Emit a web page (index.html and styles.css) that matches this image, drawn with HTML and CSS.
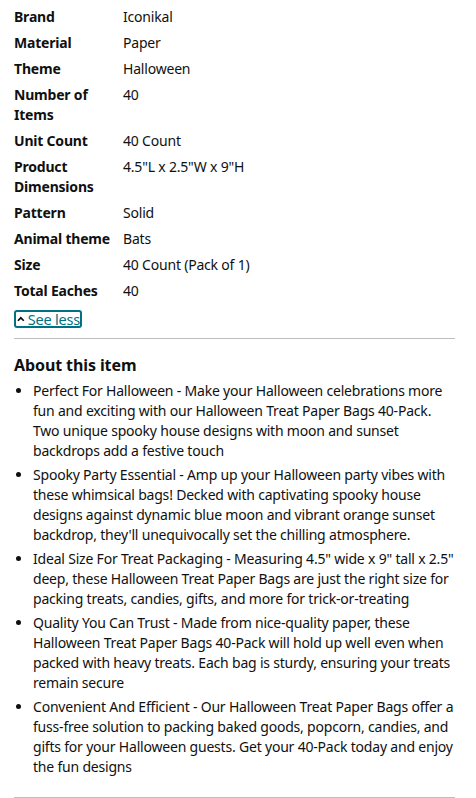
FILE: index.html
```html
<!DOCTYPE html>
<html>
<head>
<meta charset="utf-8">
<link rel="stylesheet" href="styles.css">
</head>
<body>
<div class="page">
  <div class="specs">
    <div class="row"><div class="label">Brand</div><div class="value">Iconikal</div></div>
    <div class="row"><div class="label">Material</div><div class="value">Paper</div></div>
    <div class="row"><div class="label">Theme</div><div class="value">Halloween</div></div>
    <div class="row"><div class="label">Number of Items</div><div class="value">40</div></div>
    <div class="row"><div class="label">Unit Count</div><div class="value">40 Count</div></div>
    <div class="row"><div class="label">Product Dimensions</div><div class="value">4.5"L x 2.5"W x 9"H</div></div>
    <div class="row"><div class="label">Pattern</div><div class="value">Solid</div></div>
    <div class="row"><div class="label">Animal theme</div><div class="value">Bats</div></div>
    <div class="row"><div class="label">Size</div><div class="value">40 Count (Pack of 1)</div></div>
    <div class="row"><div class="label">Total Eaches</div><div class="value">40</div></div>
  </div>
  <div class="toggle-line">
    <a class="toggle" href="#"><svg class="chev" width="11" height="8" viewBox="0 0 11 8"><path d="M1.3 6.5 L5.5 2.3 L9.7 6.5" fill="none" stroke="#0F1111" stroke-width="2.4"/></svg><span class="toggle-text">See less</span></a>
  </div>
  <hr class="divider">
  <h2 class="heading">About this item</h2>
  <ul class="bullets">
    <li>Perfect For Halloween - Make your Halloween celebrations more fun and exciting with our Halloween Treat Paper Bags 40-Pack. Two unique spooky house designs with moon and sunset backdrops add a festive touch</li>
    <li>Spooky Party Essential - Amp up your Halloween party vibes with these whimsical bags! Decked with captivating spooky house designs against dynamic blue moon and vibrant orange sunset backdrop, they'll unequivocally set the chilling atmosphere.</li>
    <li>Ideal Size For Treat Packaging - Measuring 4.5" wide x 9" tall x 2.5" deep, these Halloween Treat Paper Bags are just the right size for packing treats, candies, gifts, and more for trick-or-treating</li>
    <li>Quality You Can Trust - Made from nice-quality paper, these Halloween Treat Paper Bags 40-Pack will hold up well even when packed with heavy treats. Each bag is sturdy, ensuring your treats remain secure</li>
    <li>Convenient And Efficient - Our Halloween Treat Paper Bags offer a fuss-free solution to packing baked goods, popcorn, candies, and gifts for your Halloween guests. Get your 40-Pack today and enjoy the fun designs</li>
  </ul>
  <hr class="divider bottom">
</div>
</body>
</html>
```

FILE: styles.css
```css
html, body {
  margin: 0;
  padding: 0;
  background: #ffffff;
}
body {
  font-family: "Noto Sans", "Open Sans", sans-serif;
  font-size: 14px;
  line-height: 20px;
  letter-spacing: -0.2px;
  color: #0F1111;
}
.page {
  padding: 7px 18px 0 14px;
}
.specs {
  display: flex;
  flex-direction: column;
}
.row {
  display: grid;
  grid-template-columns: 109px 1fr;
  padding-bottom: 6px;
}
.label {
  font-weight: 700;
  padding-right: 4px;
}
.toggle-line {
  padding-top: 3px;
  height: 20px;
  display: flex;
}
.toggle {
  display: inline-flex;
  align-items: center;
  gap: 3px;
  color: #007185;
  text-decoration: none;
  border: 2px solid #007185;
  border-radius: 3px;
  height: 14px;
  width: 63px;
  overflow: hidden;
  padding-left: 1px;
}
.toggle-text {
  white-space: nowrap;
  line-height: 14px;
  font-size: 14.5px;
}
.divider {
  border: 0;
  border-top: 1px solid #bbbfbf;
  margin: 8px 3px 0 0;
  height: 0;
}
.heading {
  font-size: 16px;
  line-height: 24px;
  font-weight: 700;
  letter-spacing: -0.1px;
  margin: 14px 0 4px 0;
}
.bullets {
  margin: 0;
  padding-left: 19px;
  display: flex;
  flex-direction: column;
  gap: 4px;
}
.divider.bottom {
  margin-top: 20px;
}
```
